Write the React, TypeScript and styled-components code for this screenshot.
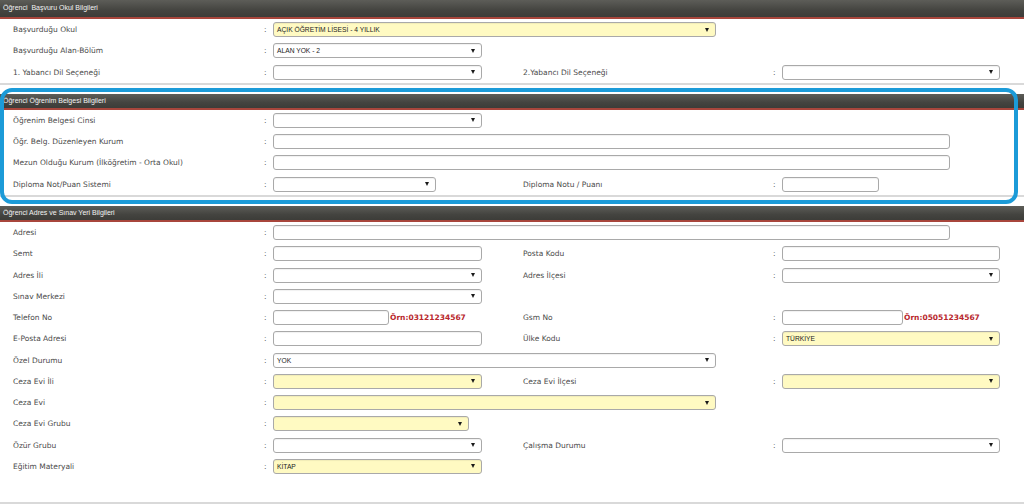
import React, { ReactNode } from 'react'
import styled, { createGlobalStyle } from 'styled-components'

const GlobalStyle = createGlobalStyle`
    html, body {
        margin: 0;
        padding: 0;
        background: #ffffff;
    }
    body {
        font-family: 'DejaVu Sans', Verdana, sans-serif;
        width: 1024px;
        height: 504px;
        overflow: hidden;
    }
`

const Page = styled.div`
    display: flex;
    flex-direction: column;
    gap: 9px;
    width: 1024px;
`

const SectionRoot = styled.section<{ $pad?: number }>`
    border-bottom: 2px solid #d9d9d9;
    padding-bottom: ${({ $pad = 0 }) => $pad}px;
    position: relative;
`

const SectionHeader = styled.div<{ $tall?: boolean }>`
    align-items: center;
    background: linear-gradient(#5d5d58, #444440 60%, #3c3c38);
    border-bottom: 2px solid #a8463c;
    box-sizing: border-box;
    color: #f2f2f2;
    display: flex;
    font-family: 'Liberation Sans', Arial, sans-serif;
    font-size: 7px;
    height: ${({ $tall }) => ($tall ? 19 : 16)}px;
    padding: ${({ $tall }) => ($tall ? '0 0 2px 3px' : '0 0 0 3px')};
    white-space: pre;
`

const Highlight = styled.div`
    border: 4.5px solid #1c9bd8;
    border-radius: 12px;
    bottom: -9px;
    left: 0;
    pointer-events: none;
    position: absolute;
    right: 6px;
    top: -6px;
`

function Section({
    title,
    children,
    tall,
    pad,
    highlight,
}: {
    title: string
    children?: ReactNode
    tall?: boolean
    pad?: number
    highlight?: boolean
}) {
    return (
        <SectionRoot $pad={pad}>
            <SectionHeader $tall={tall}>{title}</SectionHeader>
            {children}
            {highlight ? <Highlight /> : null}
        </SectionRoot>
    )
}

const Row = styled.div`
    align-items: center;
    display: grid;
    grid-template-columns: 251px 9px 250px 250px 9px 1fr;
    height: 21.27px;
    padding-left: 13px;
`

const Label = styled.div`
    color: #4a4a4a;
    font-size: 7.5px;
    white-space: nowrap;
`

const Colon = styled.div`
    color: #555555;
    font-size: 7.5px;
`

const FieldCell = styled.div<{ $span?: boolean }>`
    align-items: center;
    display: flex;
    grid-column: ${({ $span }) => ($span ? '3 / -1' : 'auto')};
`

const Box = styled.div<{ $w: number; $yellow?: boolean }>`
    align-items: center;
    background: ${({ $yellow }) => ($yellow ? '#fffac2' : '#ffffff')};
    border: 1px solid #a9a9a9;
    border-radius: 3px;
    box-shadow: inset 0 1px 1px rgba(0, 0, 0, 0.06);
    box-sizing: border-box;
    color: #222222;
    display: flex;
    font-family: 'Liberation Sans', Arial, sans-serif;
    font-size: 6.7px;
    height: 15px;
    padding: 0 6px 0 3px;
    width: ${({ $w }) => $w}px;
`

const BoxText = styled.span`
    flex-grow: 1;
    white-space: nowrap;
`

const Arrow = styled.span`
    border-left: 2.5px solid transparent;
    border-right: 2.5px solid transparent;
    border-top: 4px solid #1a1a1a;
    height: 0;
    width: 0;
`

const Hint = styled.span`
    color: #b8262c;
    font-size: 7.5px;
    font-weight: bold;
    margin-left: 1px;
    white-space: nowrap;
`

function Select({
    w = 209,
    yellow,
    value,
}: {
    w?: number
    yellow?: boolean
    value?: string
}) {
    return (
        <Box $w={w} $yellow={yellow}>
            <BoxText>{value}</BoxText>
            <Arrow />
        </Box>
    )
}

function Input({ w = 209 }: { w?: number }) {
    return (
        <Box $w={w}>
            <BoxText />
        </Box>
    )
}

function Field({
    label,
    children,
    span,
}: {
    label: string
    children?: ReactNode
    span?: boolean
}) {
    return (
        <>
            <Label>{label}</Label>
            <Colon>:</Colon>
            <FieldCell $span={span}>{children}</FieldCell>
        </>
    )
}

export default function App() {
    return (
        <>
            <GlobalStyle />
            <Page>
                <Section title="Öğrenci  Başvuru Okul Bilgileri" tall>
                    <Row>
                        <Field label="Başvurduğu Okul" span>
                            <Select w={443} yellow value="AÇIK ÖĞRETİM LİSESİ - 4 YILLIK" />
                        </Field>
                    </Row>
                    <Row>
                        <Field label="Başvurduğu Alan-Bölüm">
                            <Select value="ALAN YOK - 2" />
                        </Field>
                    </Row>
                    <Row>
                        <Field label="1. Yabancı Dil Seçeneği">
                            <Select />
                        </Field>
                        <Field label="2.Yabancı Dil Seçeneği">
                            <Select w={218} />
                        </Field>
                    </Row>
                </Section>

                <Section title="Öğrenci Öğrenim Belgesi Bilgileri" highlight>
                    <Row>
                        <Field label="Öğrenim Belgesi Cinsi">
                            <Select />
                        </Field>
                    </Row>
                    <Row>
                        <Field label="Öğr. Belg. Düzenleyen Kurum" span>
                            <Input w={677} />
                        </Field>
                    </Row>
                    <Row>
                        <Field label="Mezun Olduğu Kurum (İlköğretim - Orta Okul)" span>
                            <Input w={677} />
                        </Field>
                    </Row>
                    <Row>
                        <Field label="Diploma Not/Puan Sistemi">
                            <Select w={163} />
                        </Field>
                        <Field label="Diploma Notu / Puanı">
                            <Input w={97} />
                        </Field>
                    </Row>
                </Section>

                <Section title="Öğrenci Adres ve Sınav Yeri Bilgileri" pad={25}>
                    <Row>
                        <Field label="Adresi" span>
                            <Input w={677} />
                        </Field>
                    </Row>
                    <Row>
                        <Field label="Semt">
                            <Input />
                        </Field>
                        <Field label="Posta Kodu">
                            <Input w={218} />
                        </Field>
                    </Row>
                    <Row>
                        <Field label="Adres İli">
                            <Select />
                        </Field>
                        <Field label="Adres İlçesi">
                            <Select w={218} />
                        </Field>
                    </Row>
                    <Row>
                        <Field label="Sınav Merkezi">
                            <Select />
                        </Field>
                    </Row>
                    <Row>
                        <Field label="Telefon No">
                            <Input w={116} />
                            <Hint>Örn:03121234567</Hint>
                        </Field>
                        <Field label="Gsm No">
                            <Input w={121} />
                            <Hint>Örn:05051234567</Hint>
                        </Field>
                    </Row>
                    <Row>
                        <Field label="E-Posta Adresi">
                            <Input />
                        </Field>
                        <Field label="Ülke Kodu">
                            <Select w={218} yellow value="TÜRKİYE" />
                        </Field>
                    </Row>
                    <Row>
                        <Field label="Özel Durumu" span>
                            <Select w={443} value="YOK" />
                        </Field>
                    </Row>
                    <Row>
                        <Field label="Ceza Evi İli">
                            <Select yellow />
                        </Field>
                        <Field label="Ceza Evi İlçesi">
                            <Select w={218} yellow />
                        </Field>
                    </Row>
                    <Row>
                        <Field label="Ceza Evi" span>
                            <Select w={443} yellow />
                        </Field>
                    </Row>
                    <Row>
                        <Field label="Ceza Evi Grubu">
                            <Select w={196} yellow />
                        </Field>
                    </Row>
                    <Row>
                        <Field label="Özür Grubu">
                            <Select />
                        </Field>
                        <Field label="Çalışma Durumu">
                            <Select w={218} />
                        </Field>
                    </Row>
                    <Row>
                        <Field label="Eğitim Materyali">
                            <Select yellow value="KİTAP" />
                        </Field>
                    </Row>
                </Section>
            </Page>
        </>
    )
}
